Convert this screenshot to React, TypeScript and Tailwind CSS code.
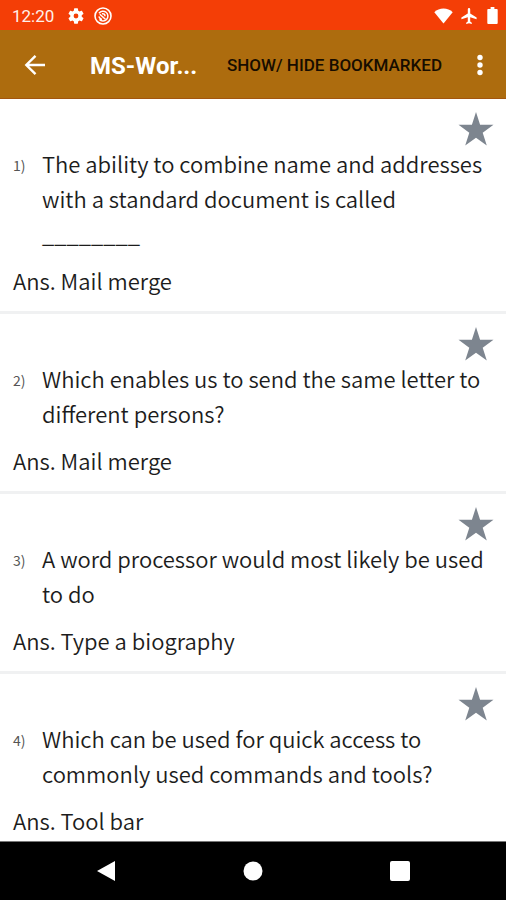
import { useState } from 'react'

const questions = [
  {
    id: 1,
    text: 'The ability to combine name and addresses with a standard document is called ________',
    answer: 'Mail merge',
  },
  { id: 2, text: 'Which enables us to send the same letter to different persons?', answer: 'Mail merge' },
  { id: 3, text: 'A word processor would most likely be used to do', answer: 'Type a biography' },
  {
    id: 4,
    text: 'Which can be used for quick access to commonly used commands and tools?',
    answer: 'Tool bar',
  },
]

function StatusBar() {
  return (
    <div className="flex h-[30px] shrink-0 items-center justify-between bg-[#f43e06] pl-3 pr-2 pt-px text-white">
      <div className="flex items-center gap-2">
        <span className="mr-1 text-[17px] leading-5 text-[#fff0ea]">12:20</span>
        {/* Settings */}
        <svg className="ml-0.5" width="16" height="16" viewBox="2 2 20 20" fill="currentColor" aria-hidden="true">
          <path d="M19.14 12.94c.04-.3.06-.61.06-.94 0-.32-.02-.64-.07-.94l2.03-1.58a.49.49 0 0 0 .12-.61l-1.92-3.32a.49.49 0 0 0-.59-.22l-2.39.96a7 7 0 0 0-1.62-.94l-.36-2.54a.48.48 0 0 0-.48-.41h-3.84a.48.48 0 0 0-.47.41l-.36 2.54c-.59.24-1.13.57-1.62.94l-2.39-.96a.48.48 0 0 0-.59.22L2.74 8.87a.48.48 0 0 0 .12.61l2.03 1.58a7.5 7.5 0 0 0 0 1.88l-2.03 1.58a.49.49 0 0 0-.12.61l1.92 3.32c.12.22.37.29.59.22l2.39-.96c.5.38 1.03.7 1.62.94l.36 2.54c.05.24.24.41.48.41h3.84c.24 0 .44-.17.47-.41l.36-2.54a7 7 0 0 0 1.62-.94l2.39.96c.22.08.47 0 .59-.22l1.92-3.32a.48.48 0 0 0-.12-.61zM12 15a3 3 0 1 1 0-6 3 3 0 0 1 0 6z" />
        </svg>
        {/* Privacy ring */}
        <svg className="ml-0.5" width="18" height="18" viewBox="0 0 18 18" fill="none" stroke="currentColor" aria-hidden="true">
          <circle cx="9" cy="9" r="8" strokeWidth="1.6" />
          <path d="M5 6.200a4.900 4.900 0 1 1 .4 6.200M5.800 7.200l5.600 5M4.800 9.500c.6 1.600 1.500 2.500 3.200 2.900M8 6.800c1.800-.4 3 .6 3 2.400" strokeWidth="1.500" />
        </svg>
      </div>
      <div className="flex items-center gap-2">
        <svg width="19" height="16" viewBox="0 0 19 16" fill="currentColor" aria-hidden="true">
          <path d="M9.500 15.500.3 4.200C2.700 1.900 6 .6 9.500.6s6.800 1.300 9.200 3.600z" />
        </svg>
        <svg width="16" height="16" viewBox="2 2 19 20" fill="currentColor" aria-hidden="true">
          <path d="M21 16v-2l-8-5V3.500a1.500 1.500 0 0 0-3 0V9l-8 5v2l8-2.500V19l-2 1.500V22l3.500-1 3.500 1v-1.500L13 19v-5.500z" />
        </svg>
        <svg className="ml-0.5" width="11" height="17" viewBox="0 0 11 18" fill="currentColor" aria-hidden="true">
          <path d="M3.500 0h4v2H10a1 1 0 0 1 1 1v14a1 1 0 0 1-1 1H1a1 1 0 0 1-1-1V3a1 1 0 0 1 1-1h2.500z" />
        </svg>
      </div>
    </div>
  )
}

function AppBar({ onToggle }: { onToggle: () => void }) {
  return (
    <header className="flex h-[69px] shrink-0 items-center border-b border-[#a3560f] bg-[#ad6c0e] pl-6 pr-3.5 pt-0.5">
      <button type="button" aria-label="Back" className="text-white">
        <svg width="22" height="22" viewBox="0 0 22 22" fill="none" stroke="currentColor" strokeWidth="2.400">
          <path d="M21 11H3M11.500 1.800 2.300 11l9.200 9.200" />
        </svg>
      </button>
      <h1 className="ml-11 min-w-0 flex-1 truncate pt-0.5 text-[24px] font-bold leading-8 text-white">MS-Wor...</h1>
      <button type="button" onClick={onToggle} className="shrink-0 text-[17px] font-medium leading-6 text-[#170d00]">
        SHOW/ HIDE BOOKMARKED
      </button>
      <button type="button" aria-label="More options" className="ml-6.5 flex w-6 justify-center text-white">
        <svg width="6" height="22" viewBox="0 0 6 22" fill="currentColor">
          <circle cx="3" cy="3.500" r="2.700" />
          <circle cx="3" cy="11" r="2.700" />
          <circle cx="3" cy="18.500" r="2.700" />
        </svg>
      </button>
    </header>
  )
}

export default function App() {
  const [marked, setMarked] = useState<number[]>([])
  const [onlyMarked, setOnlyMarked] = useState(false)

  const toggle = (id: number) =>
    setMarked((m) => (m.includes(id) ? m.filter((x) => x !== id) : [...m, id]))

  const visible = onlyMarked ? questions.filter((q) => marked.includes(q.id)) : questions

  return (
    <div className="flex h-screen flex-col bg-white font-['Roboto',sans-serif]">
      <StatusBar />
      <AppBar onToggle={() => setOnlyMarked(!onlyMarked)} />

      <main className="min-h-0 flex-1 overflow-hidden font-['Noto_Sans_CJK_SC',sans-serif] text-[#1c1c1c]">
        {visible.map((q) => (
          <article key={q.id} className="flex flex-col border-b-3 border-[#f0f1f2] pb-[13px] pl-[13px] pr-3 pt-[13px]">
            <button
              type="button"
              aria-label={`Bookmark question ${q.id}`}
              aria-pressed={marked.includes(q.id)}
              onClick={() => toggle(q.id)}
              className={marked.includes(q.id) ? 'self-end text-[#ad6c0e]' : 'self-end text-[#7d858f]'}
            >
              <svg width="36" height="34" viewBox="0 0 36 35" fill="currentColor">
                <path d="M18 0l4.200 13.200H36l-11.100 8.200 4.200 13.200L18 26.500 6.900 34.600l4.200-13.200L0 13.200h13.800z" />
              </svg>
            </button>
            <div className="flex">
              <span className="w-[29px] shrink-0 pt-0.5 text-sm leading-[35px] text-[#555]">{q.id})</span>
              <p className="flex-1 text-[22px] font-[350] leading-[35px]">{q.text}</p>
            </div>
            <p className="mt-3 text-[22px] font-[350] leading-[35px]">Ans. {q.answer}</p>
          </article>
        ))}
      </main>

      <nav className="grid h-[59px] shrink-0 grid-cols-3 items-center justify-items-center border-t border-[#777] bg-black px-8 text-white">
        <button type="button" aria-label="Back">
          <svg width="20" height="22" viewBox="0 0 20 22" fill="currentColor">
            <path d="M19 1v20L1 11z" />
          </svg>
        </button>
        <button type="button" aria-label="Home">
          <svg width="20" height="20" viewBox="0 0 20 20" fill="currentColor">
            <circle cx="10" cy="10" r="9.500" />
          </svg>
        </button>
        <button type="button" aria-label="Recent apps">
          <svg width="20" height="20" viewBox="0 0 20 20" fill="currentColor">
            <rect width="20" height="20" rx="2" />
          </svg>
        </button>
      </nav>
    </div>
  )
}
